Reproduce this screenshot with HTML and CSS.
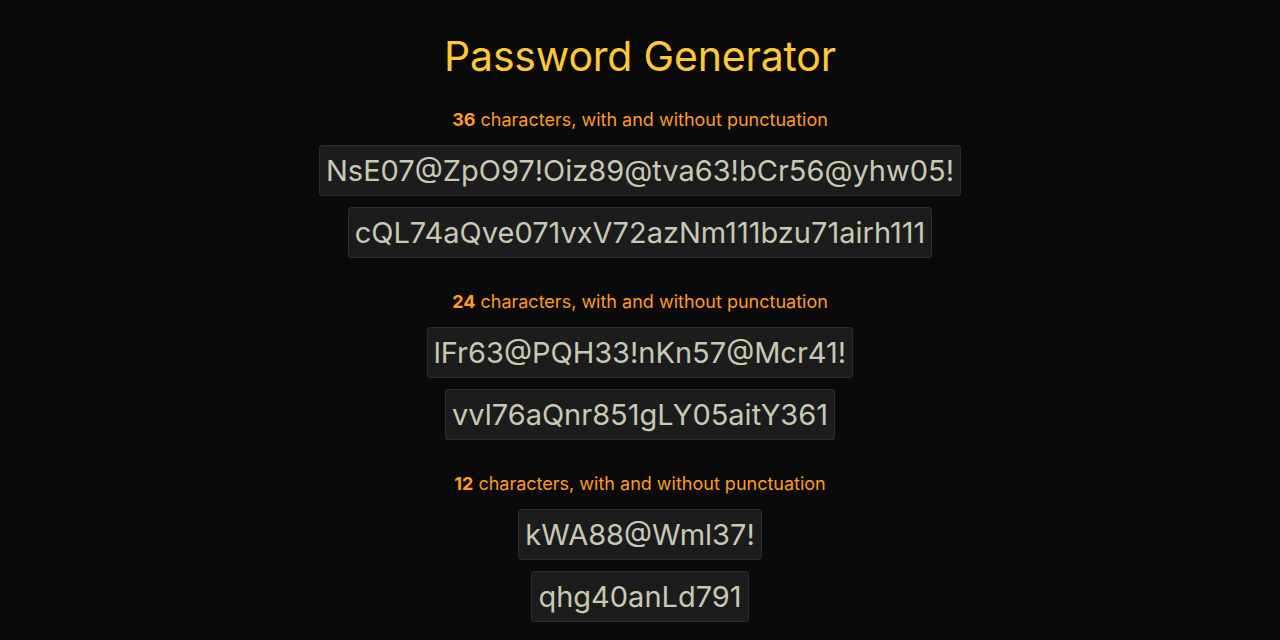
FILE: index.html
```html
<!DOCTYPE html>
<html lang="en">
<head>
<meta charset="utf-8">
<title>Password Generator</title>
<link rel="stylesheet" href="styles.css">
</head>
<body>
<main class="page">
  <h1 class="title">Password Generator</h1>
  <section class="group">
    <p class="label"><strong>36</strong> characters, with and without punctuation</p>
    <div class="pw">NsE07@ZpO97!Oiz89@tva63!bCr56@yhw05!</div>
    <div class="pw">cQL74aQve071vxV72azNm111bzu71airh111</div>
  </section>
  <section class="group">
    <p class="label"><strong>24</strong> characters, with and without punctuation</p>
    <div class="pw">lFr63@PQH33!nKn57@Mcr41!</div>
    <div class="pw">vvl76aQnr851gLY05aitY361</div>
  </section>
  <section class="group">
    <p class="label"><strong>12</strong> characters, with and without punctuation</p>
    <div class="pw">kWA88@Wml37!</div>
    <div class="pw">qhg40anLd791</div>
  </section>
</main>
</body>
</html>
```

FILE: styles.css
```css
html, body {
  margin: 0;
  padding: 0;
  background: #0a0a0a;
}
body {
  font-family: Inter, "Noto Sans", sans-serif;
}
.page {
  display: flex;
  flex-direction: column;
  align-items: center;
  padding-top: 30px;
}
.title {
  margin: 0;
  font-size: 41px;
  font-weight: 400;
  line-height: 52px;
  color: #fdc830;
  letter-spacing: -0.2px;
}
.group {
  display: flex;
  flex-direction: column;
  align-items: center;
  gap: 11px;
  margin-top: 26px;
}
.group + .group {
  margin-top: 32px;
}
.label {
  margin: 0 0 2px;
  font-size: 18px;
  line-height: 24px;
  color: #ff9a1f;
}
.label strong {
  font-weight: 700;
}
.pw {
  font-size: 29px;
  line-height: 49px;
  padding: 0 6px;
  color: #c8c9b2;
  background: #1c1c1c;
  border: 1px solid #2c2c2c;
  border-radius: 3px;
}
```
